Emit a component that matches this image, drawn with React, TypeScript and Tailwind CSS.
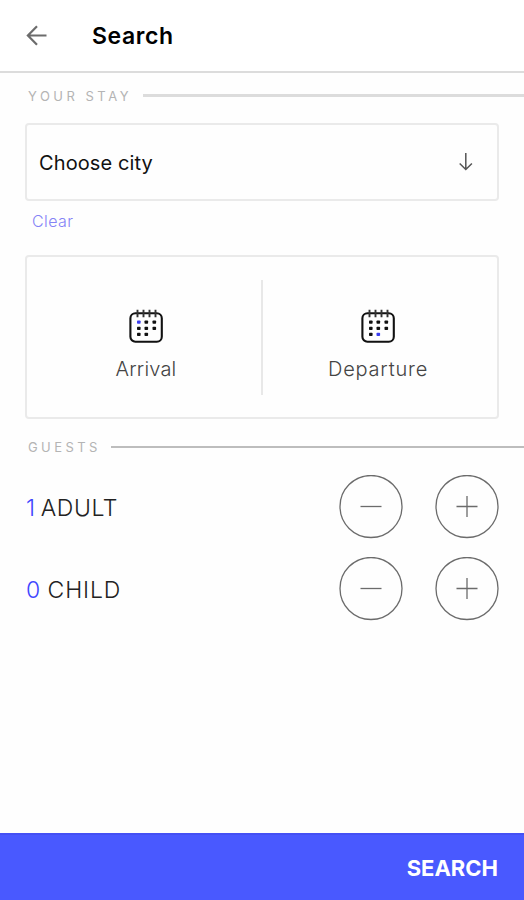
import { useState } from 'react';

const DOTS = [
  [10, 13], [17.5, 13], [25.5, 13],
  [10, 19.2], [17.5, 19.2], [25.5, 19.2],
  [10, 25.2], [17.5, 25.2],
];

function ArrowLeft() {
  return (
    <svg width="22" height="22" viewBox="0 0 22 22" fill="none" stroke="#6c6c6c" strokeWidth="2.2">
      <path d="M20.5 10.5H2.5M11 1.3L1.9 10.5l9.1 9.2" />
    </svg>
  );
}

function ArrowDown() {
  return (
    <svg width="14" height="20" viewBox="0 0 14 20" fill="none" stroke="#555" strokeWidth="1.5">
      <path d="M6.8 1v17M.7 11.5l6.1 6 6.1-6" />
    </svg>
  );
}

function CalendarIcon({ active }: { active: number }) {
  return (
    <svg width="35" height="36" viewBox="0 0 35 36" fill="none">
      <rect x="1.4" y="4.2" width="31.4" height="28.6" rx="5" stroke="#111" strokeWidth="2.1" />
      <path d="M8.5 .8v7.4M14.5 .8v7.4M20.5 .8v7.4M26.5 .8v7.4" stroke="#333" strokeWidth="1.9" />
      {DOTS.map(([x, y], i) => (
        <rect key={i} x={x - 2} y={y - 1.5} width="3.6" height="3.3" rx="0.8" fill={i === active ? '#3a3cf0' : '#111'} />
      ))}
    </svg>
  );
}

function SectionTitle({ label, cls, lineCls }: { label: string; cls: string; lineCls: string }) {
  return (
    <div className="flex h-4 items-center pl-7">
      <span className={`shrink-0 whitespace-nowrap text-[13px] leading-4 text-[#b4b4b4] ${cls}`}>{label}</span>
      <div className={`flex-1 ${lineCls}`} />
    </div>
  );
}

function RoundButton({ plus, onClick }: { plus?: boolean; onClick: () => void }) {
  return (
    <button onClick={onClick} aria-label={plus ? 'Add' : 'Remove'} className="size-16 shrink-0">
      <svg width="64" height="64" viewBox="0 0 64 64" fill="none" stroke="#6b6b6b" strokeWidth="1.3">
        <circle cx="32" cy="31.5" r="31" />
        <path d={plus ? 'M21.5 31.5h21M32 21v21' : 'M21.5 31.5h21'} />
      </svg>
    </button>
  );
}

function GuestRow({ label, cls, count, onChange }: { label: string; cls: string; count: number; onChange: (n: number) => void }) {
  return (
    <div className="flex h-16 items-center justify-between pl-[26px] pr-[25px]">
      <div className={`whitespace-nowrap pt-0.5 text-[23px] font-light text-[#222] ${cls}`}>
        <span className="text-[#4046ff]">{count}</span> {label}
      </div>
      <div className="flex gap-8">
        <RoundButton onClick={() => onChange(Math.max(0, count - 1))} />
        <RoundButton plus onClick={() => onChange(count + 1)} />
      </div>
    </div>
  );
}

export default function App() {
  const [adults, setAdults] = useState(1);
  const [children, setChildren] = useState(0);

  return (
    <div className="flex h-[900px] w-full flex-col overflow-hidden bg-[#fefefe] font-['Inter',sans-serif]">
      <header className="flex h-[73px] shrink-0 items-center border-b-2 border-[#dcdcdc] bg-white pl-[26px]">
        <ArrowLeft />
        <h1 className="ml-11 pt-0.5 text-[23px] font-semibold tracking-[0.6px] text-black">Search</h1>
      </header>

      <main className="flex flex-1 flex-col">
        <div className="pt-3.5">
          <SectionTitle label="YOUR STAY" cls="w-[115px] pt-px tracking-[3.5px]" lineCls="h-[3px] bg-[#dcdcdc]" />
        </div>

        <button className="mx-[25px] mt-5 flex h-[78px] items-center justify-between rounded border-2 border-[#eaeaea] pl-3 pr-6">
          <span className="pt-px text-xl tracking-[0.1px] text-[#111]">Choose city</span>
          <ArrowDown />
        </button>
        <button className="ml-8 mt-2.5 h-5 self-start text-base leading-5 font-light tracking-[0.4px] text-[#8583f6]">Clear</button>

        <div className="mx-[25px] mt-6 flex h-[164px] items-center rounded border-2 border-[#eaeaea]">
          <button className="flex flex-1 flex-col items-center pt-[15px] pl-1">
            <CalendarIcon active={0} />
            <span className="mt-3 text-[20px] leading-6 font-light tracking-[0.2px] text-[#444]">Arrival</span>
          </button>
          <div className="h-[115px] w-0.5 bg-[#e8e8e8]" />
          <button className="flex flex-1 flex-col items-center pt-[15px] pr-1">
            <CalendarIcon active={7} />
            <span className="mt-3 text-[20px] leading-6 font-light tracking-[0.8px] text-[#444]">Departure</span>
          </button>
        </div>

        <div className="mt-5">
          <SectionTitle label="GUESTS" cls="w-[83px] tracking-[3.4px]" lineCls="-mt-px h-0.5 bg-[#bdbdbd]" />
        </div>

        <div className="mt-5 flex flex-col gap-[18px]">
          <GuestRow label="ADULT" cls="tracking-[0.6px] [word-spacing:-2px]" count={adults} onChange={setAdults} />
          <GuestRow label="CHILD" cls="tracking-[0.9px] [word-spacing:-1px]" count={children} onChange={setChildren} />
        </div>
      </main>

      <button className="flex h-[67px] shrink-0 items-center justify-end border-t-2 border-[#4450f4] bg-[#4959ff] pr-[26px] pt-0.5 text-[22px] font-bold text-white">
        SEARCH
      </button>
    </div>
  );
}
